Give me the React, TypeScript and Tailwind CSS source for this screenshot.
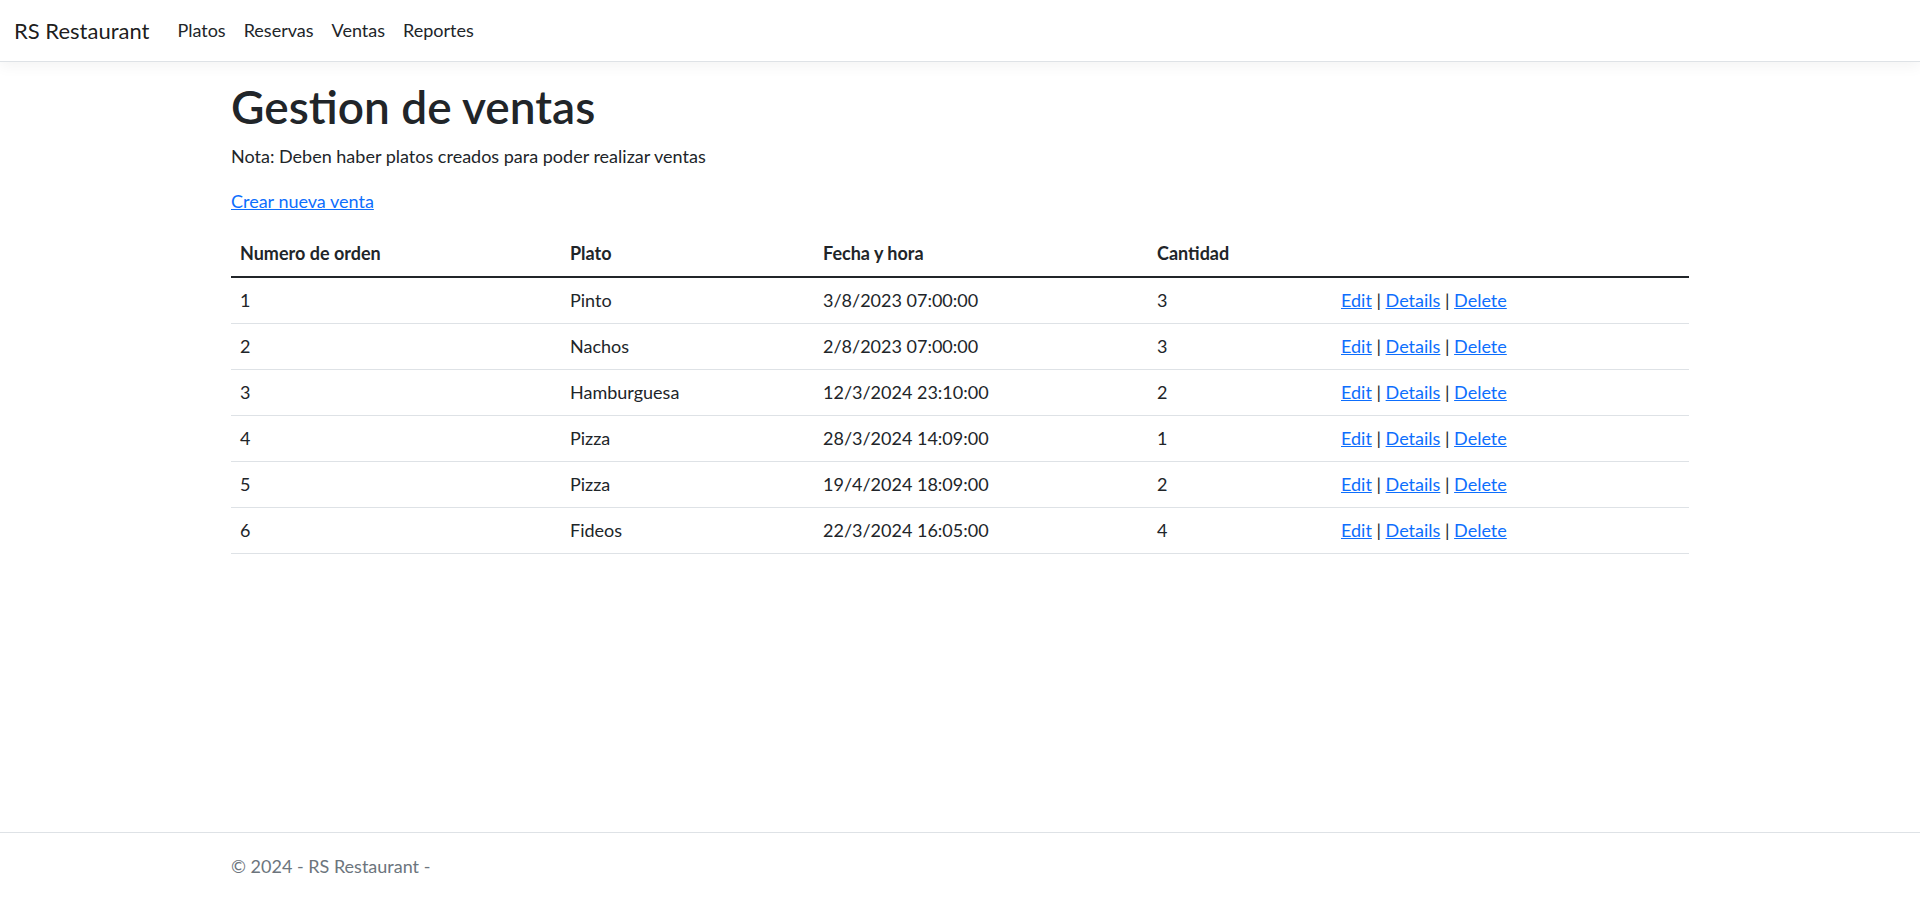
const ventas = [
  { id: 1, plato: "Pinto", fecha: "3/8/2023 07:00:00", cantidad: 3 },
  { id: 2, plato: "Nachos", fecha: "2/8/2023 07:00:00", cantidad: 3 },
  { id: 3, plato: "Hamburguesa", fecha: "12/3/2024 23:10:00", cantidad: 2 },
  { id: 4, plato: "Pizza", fecha: "28/3/2024 14:09:00", cantidad: 1 },
  { id: 5, plato: "Pizza", fecha: "19/4/2024 18:09:00", cantidad: 2 },
  { id: 6, plato: "Fideos", fecha: "22/3/2024 16:05:00", cantidad: 4 },
];

const Navbar = () => {
  return (
    <header>
      <nav className="h-[62px] bg-white border-b border-[#dee2e6] shadow-[0_4px_14px_rgba(0,0,0,0.05)] flex items-center px-[14px]">
        <a className="text-[22px] text-black/90 mr-[19px] leading-none">RS Restaurant</a>
        <ul className="flex items-center">
          {["Platos", "Reservas", "Ventas", "Reportes"].map((item) => (
            <li key={item}>
              <a className="px-[9px] text-[18px] text-[#212529]">{item}</a>
            </li>
          ))}
        </ul>
      </nav>
    </header>
  );
};

export default function App() {
  return (
    <div className="min-h-screen flex flex-col bg-white font-['Lato',sans-serif] text-[18px] leading-[27px] text-[#212529]">
      <Navbar />

      <main className="w-[1458px] mx-auto pt-[18px] pb-[18px]">
        <h1 className="text-[46px] leading-[54px] font-semibold mb-[9px]">Gestion de ventas</h1>
        <p className="mb-[18px]">Nota: Deben haber platos creados para poder realizar ventas</p>
        <p className="mb-[16px]">
          <a className="text-[#0d6efd] underline">Crear nueva venta</a>
        </p>

        <table className="w-full table-fixed border-collapse">
          <thead>
            <tr className="border-b-2 border-[#212529]">
              <th className="w-[330px] text-left font-bold p-[9px]">Numero de orden</th>
              <th className="w-[253px] text-left font-bold p-[9px]">Plato</th>
              <th className="w-[334px] text-left font-bold p-[9px]">Fecha y hora</th>
              <th className="w-[184px] text-left font-bold p-[9px]">Cantidad</th>
              <th className="p-[9px]"></th>
            </tr>
          </thead>
          <tbody>
            {ventas.map((v) => (
              <tr key={v.id} className="border-b border-[#dee2e6]">
                <td className="p-[9px]">{v.id}</td>
                <td className="p-[9px]">{v.plato}</td>
                <td className="p-[9px]">{v.fecha}</td>
                <td className="p-[9px]">{v.cantidad}</td>
                <td className="p-[9px]">
                  <a className="text-[#0d6efd] underline">Edit</a> |{" "}
                  <a className="text-[#0d6efd] underline">Details</a> |{" "}
                  <a className="text-[#0d6efd] underline">Delete</a>
                </td>
              </tr>
            ))}
          </tbody>
        </table>
      </main>

      <footer className="mt-auto border-t border-[#dee2e6] h-[65px] text-[#6c757d]">
        <div className="w-[1458px] mx-auto leading-[66px]">&copy; 2024 - RS Restaurant - </div>
      </footer>
    </div>
  );
}
